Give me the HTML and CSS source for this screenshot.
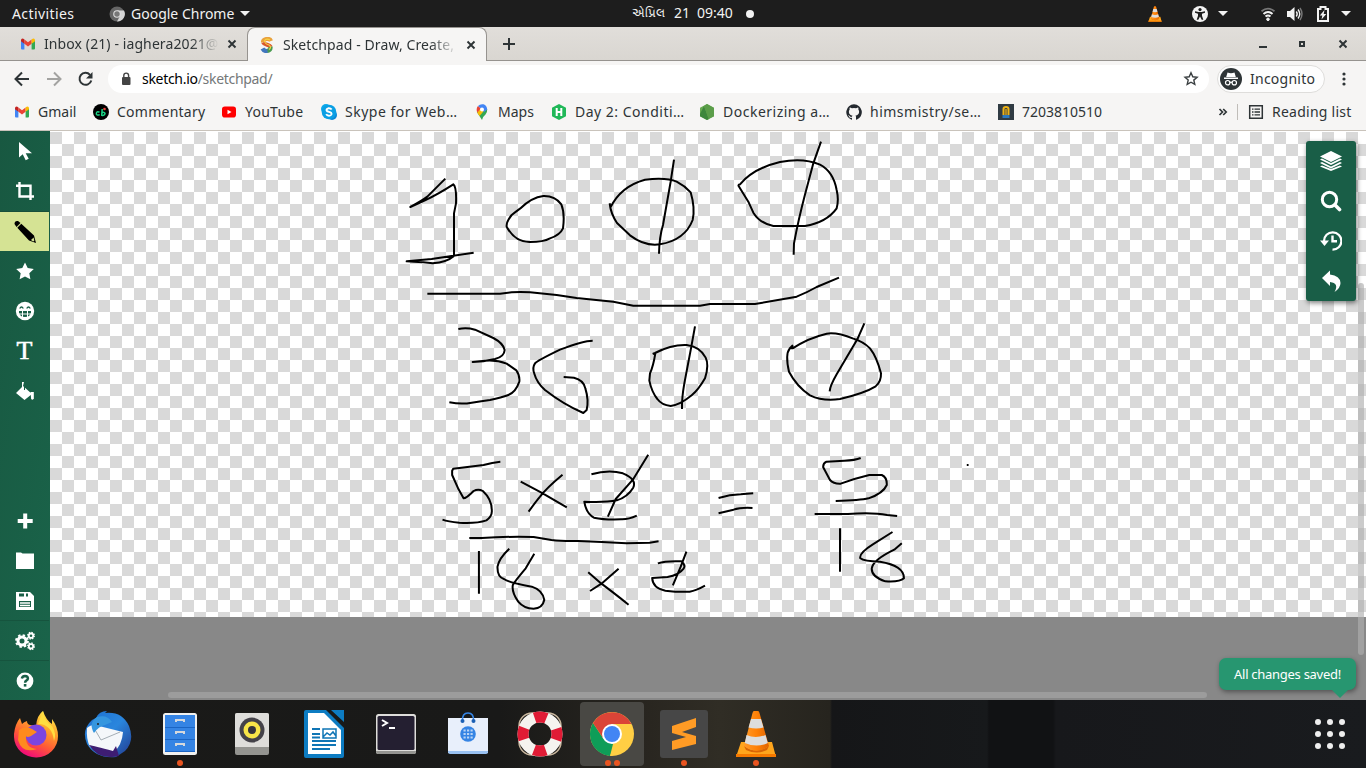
FILE: index.html
```html
<!DOCTYPE html>
<html lang="en">
<head>
<meta charset="utf-8">
<title>Sketchpad - Draw, Create, Share!</title>
<link rel="stylesheet" href="styles.css">
</head>
<body>
<svg class="defs" width="0" height="0">
  <defs>
    <linearGradient id="fox" x1=".8" y1="0" x2=".3" y2="1"><stop offset="0" stop-color="#fff44f"/><stop offset=".35" stop-color="#ffa02a"/><stop offset=".65" stop-color="#ff5a36"/><stop offset="1" stop-color="#f0047f"/></linearGradient>
    <linearGradient id="bird" x1="0" y1="0" x2="1" y2="1"><stop offset="0" stop-color="#1c6fd0"/><stop offset=".5" stop-color="#2a86dd"/><stop offset="1" stop-color="#223a8e"/></linearGradient>
    <linearGradient id="cone" x1="0" x2="1"><stop offset="0" stop-color="#ff9a2a"/><stop offset=".5" stop-color="#ff8208"/><stop offset="1" stop-color="#e06300"/></linearGradient>
  </defs>
  <symbol id="gmail" viewBox="0 0 16 16"><path fill="#4285f4" d="M1 4l3.400 2.600V13.500H2Q1 13.500 1 12.500z"/><path fill="#34a853" d="M11.600 6.600L15 4v8.500q0 1-1 1h-2.400z"/><path fill="#ea4335" d="M4.400 3.500L8 6.300l3.600-2.800v4.300L8 10.600 4.400 7.800z"/><path fill="#c5221f" d="M1 4.200q0-1.600 1.500-1.600 .8 0 1.900.9v4.300L1 5.200z"/><path fill="#fbbc04" d="M15 4.200q0-1.600-1.500-1.600-.8 0-1.900.9v4.300L15 5.200z"/></symbol>
  <symbol id="vlc" viewBox="0 0 48 48"><path fill="#ffa51c" d="M9 32h31l4 15H4z"/><path fill="#f57900" d="M4 44h40v3H4z"/><path fill="#d86506" d="M12 36q12 9 25 0l-2 4q-10 5-21 0z"/><path fill="url(#cone)" d="M22 1h4q1 0 1.500 2L37 36q-12 9-25 0L20.500 3Q21 1 22 1z"/><path fill="#ddd" d="M19 9h10l2.500 8.500q-7 2-15 0zM14.500 25q9 4 19 0l2.300 8q-11 5-23 0z"/></symbol>
</svg>

<header class="topbar">
  <span class="activities">Activities</span>
  <svg class="app-icon" viewBox="0 0 16 16"><circle cx="8" cy="8" r="7.500" fill="#666"/><path fill="#d5d5d5" d="M8 4.500h7A7.500 7.500 0 0 1 8 15.500L11 10z"/><circle cx="8" cy="8" r="3.800" fill="#ddd"/><circle cx="8" cy="8" r="2.700" fill="#777"/></svg>
  <span class="app-name">Google Chrome</span><i class="caret"></i>
  <div class="clock"><span class="month">એપ્રિલ</span><span>21</span><span>09:40</span><i class="dot"></i></div>
  <div class="tray">
    <svg class="t-vlc" width="16" height="16"><use href="#vlc"/></svg>
    <svg class="t-acc" width="16" height="16" viewBox="0 0 16 16"><circle cx="8" cy="8" r="8" fill="#f2f2f2"/><circle cx="8" cy="3.600" r="1.600" fill="#1d1d1d"/><path d="M3 5.200l3.500.8h3l3.500-.8v1.500L10 7.800v2l1.300 4H9.700L8 10.500 6.300 13.800H4.700l1.300-4v-2L3 6.700z" fill="#1d1d1d"/></svg><i class="caret"></i>
    <svg class="t-wifi" width="16" height="16" viewBox="0 0 16 16" fill="none" stroke="#f2f2f2"><path d="M1.500 5.300Q8 0 14.500 5.300" stroke="#777" stroke-width="1.800"/><path d="M3.500 8Q8 4 12.500 8" stroke-width="2"/><path d="M5.500 10.600Q8 8.500 10.500 10.600" stroke-width="2"/><circle cx="8" cy="13.300" r="1.300" fill="#f2f2f2"/></svg>
    <svg class="t-vol" width="16" height="16" viewBox="0 0 16 16" fill="none" stroke="#f2f2f2" stroke-width="1.400"><path fill="#f2f2f2" stroke="none" d="M0 5h3l4.500-4v14L3 11H0z"/><path d="M9.300 5.500q1.800 2.500 0 5M11 3.500q3.500 4.500 0 9"/><path stroke="#777" d="M13 2q4 6 0 12"/></svg>
    <svg class="t-bat" width="12" height="16" viewBox="0 0 12 16"><path fill="none" stroke="#f2f2f2" stroke-width="2" d="M1 3h2.500V1h5v2H11v12H1z"/><path fill="#f2f2f2" d="M7.500 4L2.800 9.500h2.500L4.500 13.500 9.300 8H6.700z"/></svg><i class="caret"></i>
  </div>
</header>

<div class="tabstrip">
  <div class="tab">
    <svg width="16" height="16"><use href="#gmail"/></svg><span class="tab-title">Inbox (21) - iaghera2021@</span>
    <svg class="close" width="10" height="10" viewBox="0 0 10 10"><path d="M1.500 1.500l7 7m0-7l-7 7"/></svg>
  </div>
  <div class="tab active">
    <svg width="16" height="16" viewBox="0 0 16 16" fill="none" stroke-width="4.200"><path stroke="#e9a13b" d="M12 4Q11 1.500 7.500 2 3.500 2.800 4.200 5.300"/><path stroke="#d9572b" d="M4.200 5.300Q5 7 8 7.700 11 8.500 11.500 10"/><path stroke="#4a9b50" d="M11.500 9.800Q12 13.500 8 14"/><path stroke="#4176bd" d="M8.500 14Q5 14.500 3.500 11.500"/><path stroke="#f5d245" stroke-width="1.200" d="M11 3Q7 1 5.500 4 6 7 10 8q3 2 0 4.500"/></svg><span class="tab-title">Sketchpad - Draw, Create,</span>
    <svg class="close" width="10" height="10" viewBox="0 0 10 10"><path d="M1.500 1.500l7 7m0-7l-7 7"/></svg>
  </div>
  <svg class="plus" width="12" height="12" viewBox="0 0 12 12"><path d="M6 0v12M0 6h12"/></svg>
  <svg class="wincontrols" width="90" height="12" viewBox="0 0 90 12"><path fill="#2e3436" d="M2 8h8v2H2zM42 3h6v6h-6zm2 2v2h2V5z" fill-rule="evenodd"/><path d="M82.500 2.500l7 7m0-7l-7 7" stroke="#2e3436" stroke-width="2"/></svg>
</div>

<div class="toolbar">
  <svg class="nav" width="80" height="16" viewBox="0 0 80 16" fill="none" stroke="#2e3436" stroke-width="2"><path d="M15 8H2M8 1.500L1.500 8 8 14.500"/><path stroke="#a3a3a1" d="M33 8h13M40 1.500L46.500 8 40 14.500"/><path d="M77.300 9.500A6 6 0 1 1 76 3.800"/><path fill="#2e3436" stroke="none" d="M78.500 1v6.500H72z"/></svg>
  <div class="omnibox">
    <svg width="10" height="14" viewBox="0 0 10 14"><rect x="1" y="5" width="8.500" height="8" rx="1" fill="#444"/><path d="M2.800 6V3.500a2.400 2.400 0 0 1 4.800 0V6" fill="none" stroke="#444" stroke-width="1.400"/></svg>
    <span class="url"><b>sketch.io</b>/sketchpad/</span>
    <svg class="star" width="16" height="16" viewBox="0 0 16 16"><path d="M8 1.800l1.800 4 4.300.4-3.300 2.900 1 4.300L8 11.200l-3.800 2.200 1-4.300L2 6.200l4.200-.4z" fill="none" stroke="#3a3f41" stroke-width="1.400"/></svg>
  </div>
  <div class="incognito">
    <svg width="22" height="22" viewBox="0 0 22 22"><circle cx="11" cy="11" r="11" fill="#2e3436"/><path fill="#fff" d="M7.500 4.500Q11 6 14.500 4.500L15.800 9H6.200zM4 9.500h14v1.400H4z"/><g fill="none" stroke="#fff" stroke-width="1.200"><circle cx="7.700" cy="14.700" r="2.200"/><circle cx="14.300" cy="14.700" r="2.200"/><path d="M9.800 14.300h2.400"/></g></svg><span>Incognito</span>
  </div>
  <svg class="menu" width="4" height="16" viewBox="0 0 4 16" fill="#2e3436"><circle cx="2" cy="3" r="1.600"/><circle cx="2" cy="8" r="1.600"/><circle cx="2" cy="13" r="1.600"/></svg>
</div>

<nav class="bookmarks">
  <div class="bm"><svg><use href="#gmail"/></svg><span>Gmail</span></div>
  <div class="bm"><svg viewBox="0 0 16 16"><circle cx="8" cy="8" r="8"/><circle cx="11.500" cy="5" r="1.300" fill="#e8453c"/><path fill="none" stroke="#19d486" stroke-width="1.500" d="M6.500 8.200Q3.500 6.800 3.300 10 4 11.800 6.700 10.600M9.200 5L8.700 11.300Q11.500 12 12 9.500 11.500 7.500 9 9"/></svg><span class="wide">Commentary</span></div>
  <div class="bm"><svg viewBox="0 0 16 16"><rect x="1" y="2.500" width="14" height="11" rx="2.800" fill="red"/><path fill="#fff" d="M6.500 5.700v4.600l4-2.300z"/></svg><span class="wide">YouTube</span></div>
  <div class="bm"><svg viewBox="0 0 16 16"><circle cx="5" cy="5" r="5" fill="#0aa9ea"/><circle cx="11" cy="11" r="5" fill="#0787d8"/><circle cx="8" cy="8" r="7.300" fill="#0a9fe4"/><path fill="none" stroke="#fff" stroke-width="1.900" d="M10.700 5.500Q9.500 4 7.300 4.300 5.200 4.800 5.600 6.500 6 7.400 8 7.800 10.900 8.500 10.500 10.300 10 11.800 8 11.800 6 11.700 5.200 10.100"/></svg><span class="long">Skype for Web…</span></div>
  <div class="bm"><svg viewBox="0 0 16 16"><path fill="#34a853" d="M2.800 8L8 16q.8-3.500 3.500-5.500Q13.500 8 13.200 5z"/><path fill="#fbbc04" d="M3.200 8.500l3.200-3.800L9.800 7 5.500 12z"/><path fill="#ea4335" d="M4 2l3 2.500-3.800 4Q1.800 4.500 4 2z"/><path fill="#4285f4" d="M4 2Q6-.3 9.500.3 13 1.500 13.200 5.500L10 8 7 4.500z"/><circle cx="8" cy="5.500" r="2" fill="#fff"/></svg><span>Maps</span></div>
  <div class="bm"><svg viewBox="0 0 16 16"><path fill="#20b858" d="M8 0l7 3.800v8.400L8 16l-7-3.800V3.800z"/><path stroke="#fff" stroke-width="2" d="M5.700 4v8M10.300 4v8M5.700 8h4.600"/></svg><span class="long">Day 2: Conditi…</span></div>
  <div class="bm"><svg viewBox="0 0 16 16"><path fill="#68aa52" d="M8 0l7 3.800v8.400L8 16l-7-3.800V3.800z"/><path fill="#3e873c" d="M1 10l4-8 5 13-2 1-7-3.800z"/><path fill="#5b9d49" d="M5 2l3-2 7 4v8.200L9.500 15z"/></svg><span class="long">Dockerizing a…</span></div>
  <div class="bm"><svg viewBox="0 0 16 16"><path fill="#24292f" d="M8 .2a8 8 0 0 0-2.500 15.500c.4.100.5-.2.500-.4v-1.500c-2.200.5-2.700-.9-2.700-.9-.4-1-.9-1.200-.9-1.200-.7-.5.100-.5.100-.5.800.1 1.200.8 1.200.8.700 1.200 1.900.9 2.300.7.100-.5.300-.9.500-1.100-1.800-.2-3.600-.9-3.600-4 0-.9.300-1.600.8-2.100-.1-.2-.4-1 .1-2.100 0 0 .7-.2 2.200.8a7.600 7.600 0 0 1 4 0c1.500-1 2.200-.8 2.200-.8.400 1.100.2 1.900.1 2.100.5.600.8 1.300.8 2.100 0 3.100-1.900 3.800-3.700 4 .3.300.6.700.6 1.500v2.200c0 .2.100.5.600.4A8 8 0 0 0 8 .2z"/></svg><span class="long">himsmistry/se…</span></div>
  <div class="bm"><svg viewBox="0 0 16 16"><path fill="#303b43" d="M0 0h16v16H0z"/><path fill="none" stroke="#eeb215" stroke-width="2" d="M5.500 11V5Q5.500 3 8 3t2.500 2v6"/><path stroke="#eeb215" stroke-width="1.300" d="M8 5v6"/><path fill="#2b78bd" d="M4.500 11h7v3h-7z"/></svg><span>7203810510</span></div>
  <svg class="more" width="10" height="10" viewBox="0 0 10 10"><path d="M1.500 2l3 3-3 3m3.700-6l3 3-3 3"/></svg>
  <div class="reading"><svg viewBox="0 0 16 16"><path fill="none" stroke="#2e3436" stroke-width="1.500" d="M1.700 1.700h12.600v12.600H1.700z"/><path stroke="#2e3436" stroke-width="1.300" d="M4 5.200h1.500M6.500 5.200H12M4 8h1.500M6.500 8H12M4 10.800h1.500M6.500 10.800H12"/></svg><span>Reading list</span></div>
</nav>

<main class="app">
  <aside class="tools">
    <div class="tool"><svg viewBox="0 0 20 20"><path fill="#fff" d="M4 1v15.500l3.700-3.300 3 6 3-1.400-3-5.500H17z"/></svg></div>
    <div class="tool"><svg viewBox="0 0 20 20" fill="none" stroke="#fff" stroke-width="2.400"><path d="M4.500 1v14.500H19M1 4.800h14.500V19"/></svg></div>
    <div class="tool on"><svg class="pencil" viewBox="0 0 24 24"><path d="M1.500 4Q1.500.5 5 1l2.500 2-4 4zM4.300 7.800l4-4L21 15.500l2 7.500-7-2.500z"/><path fill="#d5e394" d="M18 20l2.600-2.600.7 3-1 1z"/></svg></div>
    <div class="tool"><svg viewBox="0 0 20 20"><path fill="#fff" d="M10 1.500l2.700 5.600 6.100.8-4.500 4.300 1.100 6.100-5.400-2.900-5.400 2.900 1.100-6.100L1.200 7.900l6.100-.8z"/></svg></div>
    <div class="tool"><svg viewBox="0 0 20 20"><circle cx="10" cy="10" r="9.200" fill="#fff"/><g fill="none" stroke="#195f47" stroke-width="1.300"><path d="M4.700 7.500Q6.500 4.500 8.300 7.500M11.700 7.500Q13.500 4.500 15.300 7.500"/></g><path fill="#195f47" d="M4 10h12v1.500q-1 4.500-6 4.500t-6-4.500z"/><path stroke="#fff" d="M4 13h12M7.500 10v7M12.500 10v7"/></svg></div>
    <div class="tool letter">T</div>
    <div class="tool"><svg viewBox="0 0 20 20"><path fill="#fff" d="M8 5l9 8-7.500 6L1 12l6-6V1h2z"/><path fill="#fff" d="M15.500 11h3.300v6.500q-1.700 2.500-2.700 0z"/><path stroke="#195f47" d="M9.500 4v5"/></svg></div>
    <div class="spacer"></div>
    <div class="tool"><svg viewBox="0 0 20 20"><path stroke="#fff" stroke-width="4" d="M10.200 2.500v15M2.700 10h15"/></svg></div>
    <div class="tool"><svg viewBox="0 0 20 20"><path fill="#fff" d="M1 1.500h5l1.500 1H19V18H1z"/></svg></div>
    <div class="tool"><svg viewBox="0 0 20 20"><path fill="#fff" d="M1 1h14l4 4v14H1z"/><path fill="#195f47" d="M4 2.500h5v3H4zm7 0h2v3h-2zM4 10h12v6H4z"/><path stroke="#fff" stroke-width="1.400" d="M5 12h10M5 14.500h10"/></svg></div>
    <div class="tool line"><svg viewBox="0 0 20 20" fill="none" stroke="#fff"><circle cx="7" cy="10" r="4" stroke-width="3"/><circle cx="7" cy="10" r="5.900" stroke-width="2" stroke-dasharray="2.400 2.230"/><circle cx="16" cy="4.700" r="2.200" stroke-width="1.800"/><circle cx="16" cy="4.700" r="3.300" stroke-width="1.300" stroke-dasharray="1.400 1.190"/><circle cx="16" cy="15.300" r="2.200" stroke-width="1.800"/><circle cx="16" cy="15.300" r="3.300" stroke-width="1.300" stroke-dasharray="1.400 1.190"/></svg></div>
    <div class="tool line"><svg viewBox="0 0 20 20"><circle cx="10" cy="10" r="8.400" fill="#fff"/><path fill="none" stroke="#195f47" stroke-width="2.500" d="M6.800 7.500Q7.500 5 10 5q2.900.2 2.900 2.500 0 1.300-1.600 2.200-1.200.7-1.200 2"/><path fill="#195f47" d="M8.800 13h2.600v2.600H8.800z"/></svg></div>
  </aside>
  <section class="stage">
    <div class="canvas"></div>
    <svg class="ink" viewBox="50 131 1316 569">
      <g transform="translate(400 130) scale(.33333)">
        <path d="M136 146L82 200Q65 213 31 231L75 211Q115 192 160 163Q170 170 168 220L162 250V378Q140 397 98 400L70 397Q40 396 20 394L95 387L221 368"/>
        <path d="M360 236Q345 247 335 255Q318 276 320 290Q345 337 390 336Q430 336 450 325Q480 315 489 295Q495 250 484 223Q465 197 430 198Q395 202 360 236"/>
        <path d="M629 220L631 233Q662 169 735 149Q800 142 830 155Q855 168 872 187Q886 235 878 270Q855 330 780 343Q735 350 690 316L651 279Q632 250 629 220M822 89L812 155L789 285Q778 320 777 371"/>
        <path d="M1014 165L1020 163Q1060 115 1140 96Q1210 82 1260 104Q1300 125 1310 180Q1317 210 1310 235Q1280 277 1215 288H1120Q1080 280 1060 248L1045 215L1014 165M1263 35L1240 100L1216 190Q1195 270 1182 340L1181 374"/>
        <path d="M82 491H300L335 487Q360 485 390 487L470 495L530 504L640 515L700 527H900L930 522H1065L1190 500Q1220 488 1250 471L1317 443"/>
      </g>
      <g transform="translate(420 310) scale(.33333)">
        <path d="M115 57Q140 52 165 59L220 84Q250 100 254 120Q253 140 225 147L190 154L158 156L195 152Q230 149 260 161L289 181Q300 196 298 215Q287 247 265 255Q245 263 210 270Q185 273 155 278Q125 284 88 277"/>
        <path d="M518 92Q490 92 420 119Q350 153 345 160Q336 173 343 191Q350 217 375 240Q430 283 490 309L500 300Q507 270 496 235Q491 210 462 203L431 201"/>
        <path d="M698 132L705 129Q755 103 800 105Q840 110 857 143Q868 165 855 205Q835 240 815 256Q780 285 752 288Q725 285 712 267Q695 246 688 212L690 190Q700 168 706 130M825 49L814 110L793 220Q785 265 786 297"/>
        <path d="M1118 115H1109L1117 107L1118 115Q1165 84 1220 71Q1250 66 1300 86Q1330 95 1350 115Q1370 140 1383 190Q1384 215 1367 229Q1335 249 1260 267Q1210 275 1170 256Q1130 229 1107 185Q1095 133 1109 116M1333 40L1312 88L1250 193Q1230 228 1229 244"/>
      </g>
      <g transform="translate(430 445) scale(.35714 .33333)">
        <path d="M197 50Q175 52 150 60L65 71L62 77V90L80 133L94 160Q102 160 122 138Q135 130 148 138Q173 163 173 195Q175 213 158 226Q130 236 82 233Q50 230 35 224M254 110L312 143L383 187M371 89Q325 130 308 155Q300 165 276 200"/>
        <path d="M452 88Q500 73 540 85Q580 103 569 128Q553 156 523 166Q490 173 432 170Q437 205 459 218Q490 225 535 223Q555 224 579 212M611 29L568 104L520 162L498 215M808 159Q840 149 870 148L905 145M808 205L850 194Q870 187 903 189"/>
        <path d="M110 279H145Q215 274 290 276L340 285Q370 289 415 288Q480 290 550 295L615 293L640 289M137 318V446M222 311Q193 340 189 365Q188 395 207 402Q222 413 285 425Q315 435 320 465Q315 490 290 491Q263 491 247 470Q228 440 232 420Q235 412 268 370L292 326M443 382L480 416Q510 440 556 479M528 371L480 416L448 438"/>
        <path d="M638 355Q660 347 704 349Q717 360 710 371Q697 390 665 396L622 399Q624 430 659 437Q700 442 727 440Q745 437 770 422M718 320L702 365L680 421M1206 39Q1190 46 1160 47L1110 50Q1100 55 1101 67L1120 105Q1130 117 1150 116Q1190 100 1230 90H1265Q1280 97 1279 120Q1269 145 1228 160Q1205 166 1136 168M1077 207H1170Q1240 202 1280 210L1308 213M1148 250V380M1295 261L1240 298Q1200 325 1205 340Q1215 349 1260 350Q1328 362 1327 400Q1315 412 1275 409Q1235 395 1237 370Q1240 345 1300 314L1321 295M1503 60h5"/>
      </g>
    </svg>
    <i class="hscroll"></i><i class="vscroll"></i>
    <div class="panel">
      <svg viewBox="0 0 22 22" fill="#fff"><path d="M11 1l11 5.500L11 12 0 6.500z"/><path d="M0 9.500l2-1 9 4.500 9-4.500 2 1L11 15zM0 13l2-1 9 4.500 9-4.500 2 1-11 5.500zM0 16.500l2-1 9 3.500 9-3.500 2 1L11 21z"/></svg>
      <svg viewBox="0 0 22 22" fill="none" stroke="#fff"><circle cx="9.500" cy="9.500" r="7.200" stroke-width="3"/><path stroke-width="3.600" stroke-linecap="round" d="M15 15l4.500 4.500"/></svg>
      <svg viewBox="0 0 22 22" fill="none" stroke="#fff"><path stroke-width="2.200" d="M4 11a8.700 8.700 0 1 1 8.500 8.700"/><path stroke-width="2.400" d="M12.500 5.500v5.800H17"/><path fill="#fff" stroke="none" d="M0 10.500h9L4.500 16z"/></svg>
      <svg viewBox="0 0 22 22"><path fill="#fff" d="M2 8l8-7.500v4q10 1 10.500 8.500 0 5-6 9 5-9-4.500-10v4z"/></svg>
    </div>
    <div class="toast">All changes saved!</div>
  </section>
</main>

<footer class="dock">
  <div class="app-slot"><svg viewBox="0 0 48 48"><path fill="url(#fox)" d="M2 24Q3 14 8 8l2 6q2-2 5-3 0 3 3 4l6 1Q25 5 31 1q3 9 9 13V9q6 8 6 17A22 21 0 0 1 2 27z"/><circle cx="24" cy="25" r="10.500" fill="#7b45df"/><path fill="#ff8a1e" d="M7 20q6-5 13-1l5 3-6 4q-4 2-5 0-1 12 11 13Q10 44 6 30z"/><path fill="#ffdd40" d="M31 1q1 10 9 15 5 8 2 15Q40 14 26 14z"/></svg></div>
  <div class="app-slot"><svg viewBox="0 0 48 48"><path fill="url(#bird)" d="M12 8q3-7 11-7l-2 2q17-2 24 13 6 15-4 25l-9 6q-20 2-29-13Q-3 20 8 10z"/><path fill="#f4f7fa" d="M3 18Q6 15 11 15l28 7q-1 13-9 20L6 37Q2 29 3 18z"/><path fill="none" stroke="#a5aeb5" d="M10 18l7 12 19-8"/><path fill="#3596df" d="M13 7q10-3 15 5l-7 3q-6 1-11 8-6-10 3-16z"/><circle cx="14" cy="14" r="1" fill="#222"/><path fill="#3e1d73" d="M5 35q5 1 24 6l3-5 3 10-7 1Q13 48 5 35z"/></svg></div>
  <div class="app-slot run"><svg viewBox="0 0 48 48"><rect x="7" y="3" width="34" height="42" rx="2.500" fill="#f2f2f0"/><path fill="#3584e4" d="M9 5h30v37H9z"/><path stroke="#1b65c4" d="M9 17.500h30M9 29.500h30M9 41.500h30"/><path fill="none" stroke="#d5d8dc" stroke-width="2" d="M20 12v-2h8v2M20 24v-2h8v2M20 36v-2h8v2"/></svg></div>
  <div class="app-slot"><svg viewBox="0 0 48 48"><rect x="7" y="3" width="34" height="42" rx="2" fill="#949490"/><path fill="#deddda" d="M7 5q0-2 2-2h30q2 0 2 2v32H7z"/><circle cx="24" cy="20" r="12.500" fill="#444249"/><circle cx="24" cy="20" r="8.500" fill="#f8e548"/><circle cx="24" cy="20" r="4" fill="#36343b"/></svg></div>
  <div class="app-slot"><svg viewBox="0 0 48 48"><path fill="#0d7cc2" d="M4 2q0-2 2-2h20l18 18v28q0 2-2 2H6q-2 0-2-2zM31 0h13v12z"/><path fill="#fff" d="M8 3h16l17 17v24H8z"/><path stroke="#0f75b5" stroke-width="2" d="M12 19h8M12 24h8M12 27.500h8M12 31h24M12 35h24M12 39h18"/><path fill="none" stroke="#0f75b5" stroke-width="1.500" d="M23 19h13v9H23zM23 27l4-4 3 2 3-3 3 4"/></svg></div>
  <div class="app-slot"><svg viewBox="0 0 48 48"><rect x="4" y="4" width="40" height="40" rx="2.500" fill="#deddda"/><path fill="#949490" d="M4 41h40q0 3-2 3H6q-2 0-2-3z"/><rect x="5.500" y="6" width="37" height="34" rx="1.500" fill="#241f31"/><path fill="none" stroke="#fff" stroke-width="2" d="M10 10l5 3-5 3M17 18h6"/></svg></div>
  <div class="app-slot"><svg viewBox="0 0 48 48"><path fill="#e8effb" d="M4 8h40v35H4z"/><path fill="#99c1f1" d="M4 41h40v1q0 2-2 2H6q-2 0-2-2z"/><path fill="none" stroke="#3584e4" stroke-width="1.600" d="M18.500 11Q18 3 24 3q6 0 5.500 8"/><circle cx="18.500" cy="11" r="2" fill="#1a5fb4"/><circle cx="29.500" cy="11" r="2" fill="#1a5fb4"/><circle cx="24" cy="24" r="7.800" fill="#3584e4"/><path stroke="#b8d3f5" stroke-width="2.200" stroke-dasharray="2.200 1.300" d="M19.500 20.500h9.200M19.500 24h9.200M19.500 27.500h9.200"/></svg></div>
  <div class="app-slot"><svg viewBox="0 0 48 48" fill="none"><rect x="3" y="3" width="42" height="42" rx="13" stroke="#c7b59d" stroke-width="1.500"/><circle cx="24" cy="24" r="17" stroke="#f5f3ef" stroke-width="11"/><circle cx="24" cy="24" r="17" stroke="#e01b35" stroke-width="11" stroke-dasharray="12 14.704" stroke-dashoffset="6"/></svg></div>
  <div class="app-slot focus run2"><svg viewBox="0 0 48 48"><circle cx="24" cy="24" r="22" fill="#ffce44"/><path fill="#0f9d58" d="M5 13L15 28l10 6-3 12A22 22 0 0 1 5 13z"/><path fill="#db4437" d="M5 13a22 22 0 0 1 38.500 1H24l-9 14z"/><path fill="#ffce44" d="M33 25l-9 21q-1 0-2-.2L28 34z"/><circle cx="24" cy="24" r="10" fill="#fff"/><circle cx="24" cy="24" r="8" fill="#4285f4"/></svg></div>
  <div class="app-slot run"><svg viewBox="0 0 48 48"><rect width="48" height="48" rx="3" fill="#474747"/><path fill="#ff9b25" d="M12 16l24-8v9l-14 5 14 4v8l-24 6v-9l14-4-14-4z"/></svg></div>
  <div class="app-slot run"><svg viewBox="0 0 48 48"><use href="#vlc"/></svg></div>
  <svg class="grid" viewBox="0 0 30 30" fill="#eee"><circle cx="3" cy="3" r="3"/><circle cx="15" cy="3" r="3"/><circle cx="27" cy="3" r="3"/><circle cx="3" cy="15" r="3"/><circle cx="15" cy="15" r="3"/><circle cx="27" cy="15" r="3"/><circle cx="3" cy="27" r="3"/><circle cx="15" cy="27" r="3"/><circle cx="27" cy="27" r="3"/></svg>
</footer>
</body>
</html>
```
FILE: styles.css
```css
* { box-sizing: border-box; }
body { margin: 0; width: 1366px; height: 768px; overflow: hidden; display: flex; flex-direction: column; font: 14px/20px "Noto Sans", sans-serif; color: #2e3436; background: #f6f5f4; }
svg { flex: none; display: block; }
span { white-space: nowrap; }
.defs { position: absolute; }

.topbar { height: 27px; flex: none; display: flex; align-items: center; background: #1d1d1d; color: #f2f2f2; padding-left: 12px; }
.activities { width: 97px; letter-spacing: .4px; }
.app-icon { width: 16px; height: 16px; margin-right: 6px; }
.app-name { width: 104px; }
.caret { flex: none; border: 5px solid transparent; border-top-color: #f2f2f2; border-bottom: 0; margin-left: 5px; }
.clock { display: flex; align-items: center; margin-left: 382px; margin-top: -2px; width: 140px; }
.month { width: 42px; font-size: 12px; }
.clock span + span { margin-right: 7px; }
.dot { width: 8px; height: 8px; border-radius: 50%; background: #f2f2f2; margin: 2px 0 0 6px; }
.tray { display: flex; align-items: center; margin-left: auto; padding-right: 15px; }
.tray .caret { margin-left: 10px; }
.t-vlc { margin-right: 1px; }
.t-acc { margin-left: 28px; }
.t-wifi { margin-left: 32px; }
.t-vol { margin-left: 11px; }
.t-bat { margin-left: 14px; }
.t-bat + .caret { margin-left: 12px; }

.tabstrip { height: 34px; flex: none; display: flex; background: linear-gradient(#e1deda, #d9d6d1); border-bottom: 1px solid #96938f; align-items: center; }
.tab { width: 247px; height: 34px; padding-left: 20px; display: flex; align-items: center; }
.tab-title { margin-left: 8px; width: 175px; overflow: hidden; letter-spacing: .1px; -webkit-mask: linear-gradient(90deg, #000 84%, transparent); mask: linear-gradient(90deg, #000 84%, transparent); }
.close { margin-left: 8px; fill: none; stroke: #2e3436; stroke-width: 1.900; }
.tab.active { width: 240px; padding-left: 11px; margin-bottom: -1px; background: #f6f5f4; border: 1px solid #96938f; border-bottom: 0; border-radius: 8px 8px 0 0; }
.plus { margin-left: 16px; fill: none; stroke: #2e3436; stroke-width: 2; }
.wincontrols { margin-left: auto; margin-right: 19px; }

.toolbar { height: 36px; flex: none; display: flex; align-items: center; padding-left: 14px; }
.omnibox { width: 1101px; height: 28px; margin-left: 14px; border-radius: 14px; background: #fff; display: flex; align-items: center; padding: 0 10px 0 13px; }
.url { margin-left: 11px; color: #747879; letter-spacing: -.3px; }
.url b { font-weight: 400; color: #000; }
.star { margin-left: auto; }
.incognito { width: 108px; height: 28px; margin-left: 8px; border: 1px solid #dedddb; border-radius: 14px; background: #fdfdfd; display: flex; align-items: center; padding-left: 2px; }
.incognito span { margin-left: 8px; letter-spacing: .25px; }
.menu { margin-left: 17px; }

.bookmarks { height: 34px; flex: none; display: grid; grid-template-columns: 79px 128px 100px 153px 77px 148px 147px 152px 220px 19px 1fr; align-items: center; padding-left: 14px; border-bottom: 1px solid #c9c3bb; padding-bottom: 3px; }
.bm, .reading { display: flex; align-items: center; gap: 8px; }
.bm svg, .reading svg { width: 16px; height: 16px; }
.wide { letter-spacing: .25px; }
.long { letter-spacing: .5px; }
.more { fill: none; stroke: #2e3436; stroke-width: 1.700; }
.reading { height: 16px; border-left: 1px solid #c0bdb9; padding-left: 10px; letter-spacing: .25px; }

.app { flex: 1; display: flex; min-height: 0; }
.tools { width: 50px; flex: none; background: linear-gradient(100deg, #185841, #1a644a); display: flex; flex-direction: column; }
.tool { height: 40px; width: 49px; flex: none; display: flex; align-items: center; justify-content: center; border-top: 1px solid transparent; padding-bottom: 2px; }
.tool svg { width: 20px; height: 20px; }
.tool.on { height: 40px; background: #d5e394; border-top: 1px solid #174f3a; padding-bottom: 0; }
.tool .pencil { width: 24px; height: 24px; }
.tool.line { border-top-color: #16543e; padding-bottom: 0; }
.letter { font: 26px/38px "Liberation Serif", serif; color: #fff; -webkit-text-stroke: .6px #fff; }
.spacer { flex: 1; }
.spacer ~ .tool { padding-bottom: 0; }
.stage { flex: 1; position: relative; background: #888; }
.canvas { height: 486px; border-top: 1px solid #fff; background: conic-gradient(#fff 25%, #d9d9d9 0 50%, #fff 0 75%, #d9d9d9 0) 0 0 / 24px 24px; }
.ink { position: absolute; inset: 0; width: 1316px; height: 569px; fill: none; stroke: #000; stroke-linejoin: round; }
.ink path { vector-effect: non-scaling-stroke; stroke-width: 2; }
.hscroll { position: absolute; left: 118px; width: 1039px; bottom: 2px; height: 6px; border-radius: 3px; background: #9c9c9c; }
.vscroll { position: absolute; right: 2px; width: 6px; top: 152px; height: 372px; border-radius: 3px; background: rgba(175, 175, 175, .65); }
.panel { position: absolute; right: 10px; top: 10px; width: 50px; height: 160px; border-radius: 3px; background: #195e47; box-shadow: 1px 2px 5px rgba(0, 0, 0, .5); display: grid; grid-template-rows: repeat(4, 40px); place-items: center; }
.panel svg { width: 22px; height: 22px; }
.toast { position: absolute; right: 10px; bottom: 10px; width: 137px; height: 32px; border-radius: 7px; background: #279670; color: #fff; font: 13px/32px "Noto Sans", sans-serif; text-align: center; box-shadow: 1px 2px 5px rgba(0, 0, 0, .4); white-space: nowrap; letter-spacing: -.28px; }
.toast::after { content: ""; position: absolute; right: 8px; top: 32px; border: 8px solid transparent; border-top-color: #279670; border-bottom: 0; }

.dock { height: 68px; flex: none; display: flex; align-items: center; background: linear-gradient(90deg, #1a1a18 0, #191918 500px, #292620 650px, #302d25 720px, #26241e 830px, #151618 832px, #17191b 987px, #111214 989px, #111214 1053px, #17181b 1056px, #191b1e); }
.app-slot { width: 64px; height: 64px; margin: 0 4px; display: grid; place-items: center; border-radius: 4px; position: relative; flex: none; }
.app-slot svg { width: 48px; height: 48px; }
.focus { background: #494844; }
.run::after, .run2::after { content: ""; position: absolute; left: 29px; bottom: 0; width: 6px; height: 6px; border-radius: 50%; background: #e95420; }
.run2::after { left: 25px; box-shadow: 9px 0 #e95420; }
.grid { width: 30px; height: 30px; margin-left: auto; margin-right: 21px; }
```
